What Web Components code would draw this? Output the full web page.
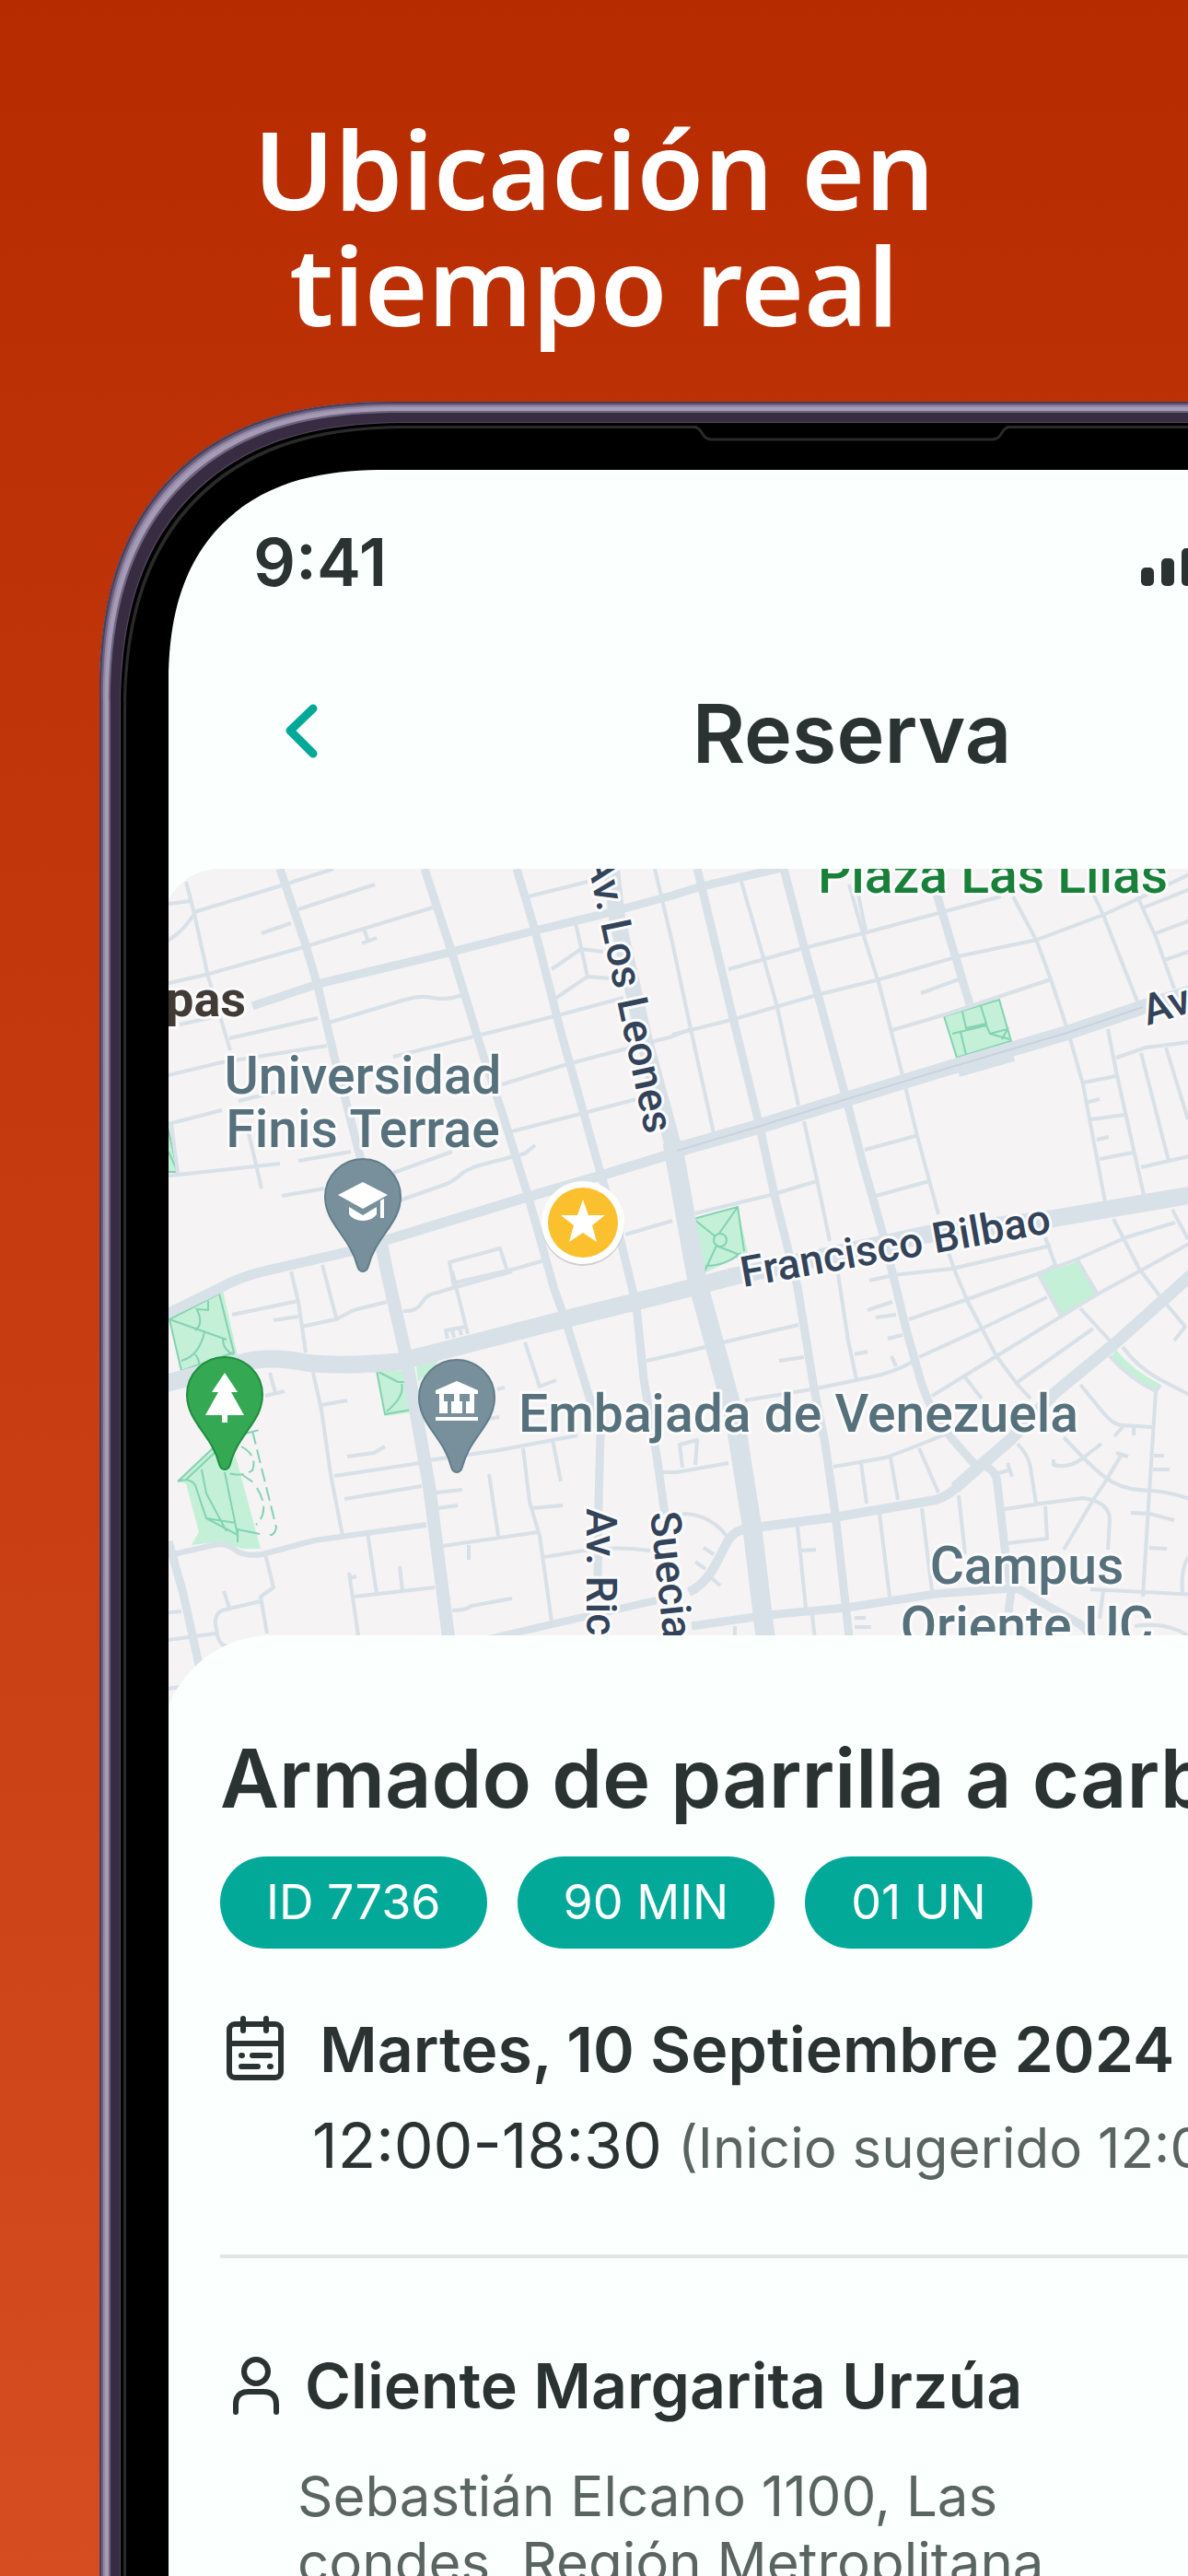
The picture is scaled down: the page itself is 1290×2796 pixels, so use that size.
<!DOCTYPE html>
<html lang="es">
<head>
<meta charset="utf-8">
<meta name="viewport" content="width=device-width, initial-scale=1">
<title>Ubicación en tiempo real</title>
<style>
    body {
        margin: 0;
        font-family: Inter, "Liberation Sans", sans-serif;
        color: #2a3331;
    }
</style>
</head>
<body>
<promo-page>
    <span slot="headline">Ubicación en<br>tiempo real</span>
    <phone-frame>
        <status-bar time="9:41"></status-bar>
        <app-bar>Reserva</app-bar>
        <booking-view>
            <city-map slot="map"></city-map>
            <span slot="title">Armado de parrilla a carbón</span>
            <info-chip slot="chips">ID 7736</info-chip>
            <info-chip slot="chips">90 MIN</info-chip>
            <info-chip slot="chips">01 UN</info-chip>
            <detail-row slot="details" icon="calendar">
                Martes, 10 Septiembre 2024
                <span slot="more"><b>12:00-18:30</b> (Inicio sugerido 12:00)</span>
            </detail-row>
            <detail-row slot="details" icon="person">
                Cliente Margarita Urzúa
                <span slot="more">Sebastián Elcano 1100, Las<br>condes, Región Metroplitana</span>
            </detail-row>
        </booking-view>
    </phone-frame>
</promo-page>

<script>
function makeTemplate(html) {
    const template = document.createElement("template");
    template.innerHTML = html;
    return template;
}

class BaseElement extends HTMLElement {
    constructor() {
        super();
        this.attachShadow({mode: "open"});
        this.shadowRoot.appendChild(this.constructor.template.content.cloneNode(true));
    }
}

class PromoPage extends BaseElement {
    static template = makeTemplate(`
<style>
    :host {
        display: block;
        height: 100vh;
        overflow: hidden;
        background: linear-gradient(#b72b00, #d64d22);
    }

    h1 {
        margin: 0;
        padding: 120px 0 64px;
        font: 600 118px/126px "Noto Sans", "Open Sans", sans-serif;
        text-align: center;
        color: #fff;
    }
</style>
<h1><slot name="headline"></slot></h1>
<slot></slot>
`);
}

class PhoneFrame extends BaseElement {
    static template = makeTemplate(`
<style>
    /* the phone runs off the right edge of the page */
    :host {
        display: block;
        position: relative;
        margin: 0 -452px 0 108px;
        padding: 74px 75px;
        background: #000;
        border-radius: 275px;
        box-shadow:
            inset 0 0 0 2px #4b4059,
            inset 0 0 0 4px #6c607f,
            inset 0 0 0 6px #9488a6,
            inset 0 0 0 10px #a69bb7,
            inset 0 0 0 12px #6f647e,
            inset 0 0 0 22px #372c42,
            inset 0 0 0 23px #54465e,
            inset 0 0 0 26px #000,
            inset 0 0 0 29px #2a2a2a;
    }

    .screen {
        min-height: 3000px;
        overflow: hidden;
        background: #fbfffe;
        border-radius: 200px;
    }

    .speaker {
        position: absolute;
        top: 25px;
        left: 0;
        right: 0;
        margin: 0 auto;
        display: block;
    }

    @supports (corner-shape: superellipse(1.28)) {
        :host {
            border-radius: 322px;
            corner-shape: superellipse(1.28);
        }

        .screen {
            border-radius: 236px;
            corner-shape: superellipse(1.28);
        }
    }
</style>
<svg class="speaker" width="340" height="22" viewBox="0 0 340 22" fill="none" aria-hidden="true">
    <path d="M2 0H338V4H2z" fill="#000"/>
    <path d="M0 3C8 3 6 16 18 16H322C334 16 332 3 340 3" stroke="#2a2a2a" stroke-width="3"/>
</svg>
<div class="screen"><slot></slot></div>
`);
}

class StatusBar extends BaseElement {
    static template = makeTemplate(`
<style>
    :host {
        display: flex;
        justify-content: space-between;
        padding: 60px 95px 0 92px;
        font-size: 72px;
        font-weight: 600;
        line-height: 80px;
    }

    .icons {
        display: flex;
        gap: 24px;
        align-items: center;
    }
</style>
<span class="time"></span>
<div class="icons">
    <svg width="80" height="52" viewBox="0 0 80 52" fill="currentColor" aria-hidden="true">
        <rect x="0" y="32" width="14" height="20" rx="5"/>
        <rect x="22" y="22" width="14" height="30" rx="5"/>
        <rect x="44" y="11" width="14" height="41" rx="5"/>
        <rect x="66" y="0" width="14" height="52" rx="5"/>
    </svg>
    <svg width="85" height="52" viewBox="0 0 85 52" fill="none" stroke="currentColor" stroke-width="9" aria-hidden="true">
        <path d="M5 18Q42 -12 80 18M19 32Q42 12 66 32M34 44Q42 38 51 44"/>
    </svg>
    <svg width="120" height="52" viewBox="0 0 120 52" fill="none" stroke="currentColor" stroke-width="4" aria-hidden="true">
        <rect x="2" y="2" width="104" height="48" rx="14"/>
        <rect x="10" y="10" width="88" height="32" rx="7" fill="currentColor"/>
        <path d="M115 19V33"/>
    </svg>
</div>
`);

    connectedCallback() {
        this.shadowRoot.querySelector(".time").textContent = this.getAttribute("time");
    }
}

class AppBar extends BaseElement {
    static template = makeTemplate(`
<style>
    :host {
        display: grid;
        grid-template-columns: 1fr auto 1fr;
        align-items: center;
        padding: 98px 95px 99px;
    }

    button {
        justify-self: start;
        display: flex;
        padding: 16px 28px;
        border: 0;
        background: none;
        color: #03a998;
    }

    h2 {
        margin: 0;
        font-size: 88px;
        font-weight: 600;
        line-height: 96px;
    }
</style>
<button type="button" aria-label="Volver">
    <svg width="40" height="64" viewBox="0 0 40 64" fill="none" stroke="currentColor" stroke-width="9" stroke-linecap="round" stroke-linejoin="round">
        <path d="M34 5L9 29L34 54"/>
    </svg>
</button>
<h2><slot></slot></h2>
`);
}

class CityMap extends BaseElement {
    static template = makeTemplate(`
<style>
    :host {
        display: block;
        height: 952px;
        overflow: hidden;
        border-radius: 64px 64px 0 0;
        background: #f5f3f4;
    }

    svg {
        display: block;
        width: 100%;
        height: 100%;
    }

    .roads {
        fill: none;
        stroke: #d8e0e8;
        stroke-linejoin: round;
    }

    .park {
        fill: #c3f0d6;
    }

    .trail {
        fill: none;
        stroke: #84d2b3;
        stroke-width: 2;
    }

    text {
        font-family: Roboto, "Liberation Sans", sans-serif;
        font-weight: 500;
        paint-order: stroke;
        stroke: #fbfbfc;
        stroke-width: 6px;
        stroke-linejoin: round;
    }

    .place {
        font-size: 57px;
        fill: #56707c;
        text-anchor: middle;
    }

    .street {
        font-size: 46px;
        fill: #33435a;
    }

    .area {
        font-size: 57px;
        fill: #188038;
        text-anchor: middle;
    }

    .town {
        font-size: 54px;
        font-weight: 700;
        fill: #423a35;
    }
</style>
<svg viewBox="175 943 1500 952" preserveAspectRatio="xMinYMin slice" role="img" aria-label="Mapa">
    <defs>
        <path id="pin" d="M0 82C-3 82 -5 80 -6 76C-14 44 -41 30 -41 1A41 41 0 0 1 41 1C41 30 14 44 6 76C5 80 3 82 0 82Z"/>
    </defs>

    <g class="park">
        <path d="M1025 1103L1085 1085L1098 1130L1039 1148Z"/>
        <path d="M753 1323L801 1310L812 1360L764 1382Z"/>
        <path d="M1130 1383L1171 1369L1191 1405L1153 1427Z"/>
        <path d="M1212 1465Q1228 1486 1259 1502L1253 1510Q1224 1494 1207 1472Z"/>
        <path d="M184 1432L242 1401L258 1472L197 1488Z"/>
        <path d="M409 1488H440L447 1533L418 1537Z"/>
        <path d="M452 1483L477 1477L454 1500Z"/>
        <path d="M213 1547L252 1567L283 1681H263L241 1673L208 1677L216 1663L202 1610L193 1608L231 1572Z"/>
        <path d="M175 1215H182L193 1272H175Z"/>
    </g>
    <g class="trail">
        <path d="M1025 1103L1085 1085L1098 1130L1039 1148ZM1045 1098L1049 1116L1071 1111L1065 1092M1034 1122L1071 1113L1075 1122L1096 1128M1043 1120L1049 1145M1075 1122L1094 1117L1088 1128"/>
        <path d="M753 1323L801 1310L808 1358M753 1323L778 1343L801 1310M764 1382L778 1352L803 1362M766 1374Q788 1374 804 1360"/>
        <circle cx="782" cy="1346" r="7" fill="#c3f0d6"/>
        <path d="M184 1432L238 1404L254 1468L197 1488ZM184 1432L246 1454M213 1420Q222 1436 212 1444M222 1446Q216 1472 197 1477M242 1453Q242 1466 254 1470M212 1470Q218 1478 216 1486M215 1421L226 1422V1412"/>
        <path d="M409 1488L418 1535L447 1530M409 1488L432 1500H440M436 1502Q440 1515 420 1532"/>
        <path d="M193 1608L231 1572M202 1606L236 1574M193 1608Q206 1603 212 1612L224 1648L258 1666L244 1598M219 1595L224 1621L246 1662M224 1648L256 1653M258 1674V1660L282 1665"/>
        <path d="M262 1570Q280 1580 274 1596Q262 1604 244 1598M262 1600L275 1609M274 1553L300 1658Q298 1668 290 1666M279 1615Q294 1640 278 1655M266 1556L282 1552" stroke-dasharray="15 6"/>
        <path d="M182 1223L193 1272H175M183 1250L193 1272"/>
    </g>

    <!-- side streets -->
    <g class="roads" stroke-width="4">
        <path d="M202 957L211 992L226 1060L241 1110L250 1140M175 982L207 978M175 1025C198 1013 205 1000 211 992M211 990L306 961L362 943"/>
        <path d="M324 987L407 960M284 1013L316 1002M175 1069L227 1057L333 1027L470 985M395 1008L400 1022M393 1024L409 1018M195 1112L241 1102"/>
        <path d="M249 1127L345 1105M357 1110L440 1085Q456 1080 470 1083T502 1080M175 1169L241 1153L355 1135M175 1222L241 1205M259 1195L300 1185M427 1147L515 1125L606 1102L677 1083"/>
        <path d="M545 1177L616 1155L681 1138L730 1125L750 1117M556 1228L634 1208L691 1193M186 1220L193 1273M175 1277L304 1263M270 1230L284 1290"/>
        <path d="M324 1260L381 1250M306 1298L352 1290M427 1273L491 1250M434 1303L485 1285Q495 1280 500 1275T520 1265L570 1252L581 1243"/>
        <path d="M574 973L638 957M625 1002L638 1060L663 1062M599 1052L631 1030L655 1033M604 1083L638 1060M711 943L730 1023L750 1117L775 1230M679 1340L730 1325"/>
        <path d="M493 1397L488 1370L543 1355L550 1377M495 1392L560 1377L591 1368M316 1380L324 1413L332 1468M350 1373L365 1430M252 1427L324 1412M297 1433L324 1429M327 1440L365 1432L384 1422L420 1413"/>
        <path d="M438 1423Q452 1424 458 1414T475 1403L495 1397L556 1380M491 1380L508 1448M486 1453L484 1444L506 1440M491 1443L493 1452M499 1442L501 1449"/>
        <path d="M340 1490L349 1530L359 1600L372 1667M349 1525L377 1520M377 1581L406 1577L418 1570M363 1602L456 1588M374 1627L458 1613M466 1585L542 1574L627 1558"/>
        <path d="M474 1620L502 1617M475 1637L497 1634M531 1600L541 1667M481 1678L584 1663M568 1572L575 1630L586 1667L599 1760M577 1637L611 1634M600 1563L609 1608M570 1457L586 1505L604 1498"/>
        <path d="M591 1690L634 1683Q670 1678 706 1683M399 1663L409 1730M384 1733L472 1723M434 1700L437 1727M379 1707L389 1775M379 1713L387 1711M509 1677V1693M491 1748Q505 1748 512 1743L556 1735"/>
        <path d="M288 1687L297 1723L283 1733L290 1773M283 1738L241 1748Q233 1752 234 1762L236 1775Q240 1790 252 1786M243 1727L249 1745M234 1773L175 1781M175 1751L197 1749M175 1834L203 1830"/>
        <path d="M702 1477L766 1462M720 1598H735L791 1588M293 1490L299 1512M288 1515L309 1510M540 1508L548 1506M530 1540L542 1538"/>
        <path d="M803 950L830 1043L844 1093L867 1200M873 1217L887 1280L901 1347M910 1383L921 1455L930 1497M791 1052L869 1030L941 1012L1023 990L1087 973M730 1123L794 1107L887 1080L955 1063L1041 1038L1126 1020L1198 993L1237 975L1300 945"/>
        <path d="M922 960L937 1013L955 1070L980 1167L996 1233L1019 1318M930 962L940 1010M969 1118L1030 1100L1141 1063M1000 1078L1041 1063M939 1248L994 1233M951 1298L1009 1282"/>
        <path d="M1100 973L1126 1022L1141 1063L1159 1117L1176 1177L1201 1310M1187 970L1198 993L1235 1087M1235 973L1255 1017L1275 1073M1242 985L1300 962M1255 1013L1300 996M1264 1042L1300 1030"/>
        <path d="M1203 1117L1212 1163L1242 1297M1212 1148L1244 1137L1300 1130M1239 1143L1269 1260M1266 1137L1290 1215M1176 1175L1212 1168M1185 1215L1221 1210M1194 1258L1230 1251M1239 1267L1300 1253M1178 1197L1194 1193M1191 1237L1204 1234"/>
        <path d="M755 1317L837 1297L887 1282M944 1390L970 1384L1034 1377L1141 1352M987 1432L1051 1410L1126 1383L1169 1367L1223 1343L1276 1327M998 1473L1066 1442L1137 1408M1012 1515L1082 1472L1191 1405L1237 1380L1300 1345M1105 1500L1187 1442"/>
        <path d="M1030 1360L1037 1380L1051 1413L1082 1472L1105 1503L1119 1518M1173 1420L1205 1455M1135 1343L1146 1373L1128 1384L1153 1430M1169 1366L1192 1405M1209 1323L1237 1377L1262 1410L1287 1440L1275 1455M1273 1313L1290 1345M1048 1495L1066 1518"/>
        <path d="M785 1457L867 1438M846 1477L873 1473M730 1471L766 1462M809 1520L887 1507L944 1495Q970 1490 991 1478M928 1470L942 1467M942 1422L969 1413M951 1430L973 1427M964 1453L980 1449M968 1472L973 1483"/>
        <path d="M905 1592L962 1582L994 1570L1026 1557M935 1588L941 1632M967 1582L975 1628M998 1572L1019 1620M955 1643L966 1733M1001 1637L1012 1727M1041 1623L1048 1687M866 1657L875 1745M869 1683L886 1682M882 1753L885 1780M798 1765V1780"/>
        <path d="M741 1643Q770 1643 789 1667M764 1680L775 1687M755 1695L766 1703M773 1713L782 1721M741 1593L738 1568L757 1563L755 1590M928 1756H940M928 1766H946"/>
        <path d="M1105 1567C1117 1580 1119 1590 1120 1600L1125 1632M1091 1638L1130 1632L1176 1626Q1205 1630 1205 1650L1203 1682M1094 1675L1137 1670L1135 1635M1155 1682L1187 1628L1201 1607L1217 1580M1212 1577L1225 1581M1084 1599L1098 1595M1094 1588L1099 1603"/>
        <path d="M1155 1560L1176 1582C1201 1607 1215 1618 1251 1618Q1275 1620 1300 1630M1144 1584V1590Q1160 1594 1174 1584L1196 1567M1173 1503C1194 1527 1205 1547 1219 1547L1251 1549M1219 1549L1210 1559M1231 1549V1558"/>
        <path d="M1255 1510L1248 1620L1241 1733M1253 1580H1264M1252 1595H1270M1248 1680L1267 1681M1228 1642L1248 1643L1275 1650M1184 1725L1300 1731M1198 1727L1194 1757M1219 1462Q1235 1484 1259 1497L1300 1518M1205 1472Q1226 1496 1255 1510L1260 1503M1290 1690Q1282 1705 1284 1728M1232 1765Q1265 1760 1290 1775"/>
    </g>

    <!-- avenues -->
    <g class="roads">
        <path stroke-width="9" d="M304 943L331 1023L345 1070L363 1147L393 1263L413 1350"/>
        <path stroke-width="14" d="M413 1345L420 1380L440 1468L466 1613L488 1785"/>
        <path stroke-width="9" d="M461 943L491 1035L524 1143L545 1207L574 1300L602 1400L613 1430L638 1510L652 1557L650 1630L649 1713"/>
        <path stroke-width="9" d="M561 943L581 1010L609 1120L652 1273L674 1347L691 1417L699 1497L713 1580L722 1643"/>
        <path stroke-width="9" d="M757 943L762 963L794 1097L825 1223L841 1297L866 1397L884 1507L896 1567L907 1643L923 1785"/>
        <path stroke-width="9" d="M851 943L873 1027L891 1090L919 1193L937 1263L959 1340L984 1443L1001 1503Q1012 1535 1034 1562L1059 1590"/>
        <path stroke-width="9" d="M1017 970L1034 1027L1053 1090"/>
        <path stroke-width="9" d="M274 1092L345 1068L491 1033L581 1010L652 993L730 972L762 962L848 942"/>
        <path stroke-width="11" d="M737 1250L649 1277L570 1300L416 1347L381 1358L290 1379Q260 1386 241 1397L175 1429"/>
        <path stroke-width="16" d="M735 1248L823 1223L919 1193L1037 1157L1162 1120L1241 1093L1300 1075M1040 1161L1100 1144"/>
        <path stroke-width="18" d="M663 935L670 997L700 1130L734 1255"/>
        <path stroke-width="21" d="M730 1240L757 1390L798 1540L817 1660L832 1785"/>
        <path stroke-width="19" d="M175 1503L259 1480Q291 1470 338 1480Q380 1483 434 1478L613 1432L730 1403L798 1385L1005 1340L1141 1323L1300 1296"/>
        <path stroke-width="13" d="M1300 1378L1212 1457L1144 1513L1098 1562L1062 1593L1037 1615"/>
        <path stroke-width="10" d="M1042 1611Q1030 1624 1016 1628L905 1647L819 1658Q798 1659 790 1673L776 1700Q765 1720 748 1728"/>
        <path stroke-width="9" d="M1066 1590Q1082 1595 1083 1610L1091 1680L1098 1727L1095 1750"/>
        <path stroke-width="9" d="M751 1765L834 1753L919 1745L1016 1730L1098 1724Q1108 1724 1115 1730L1173 1763L1195 1785"/>
        <path stroke-width="8" d="M527 1780L599 1763L634 1755L713 1737"/>
        <path stroke-width="9" d="M183 1673L199 1730L219 1820"/>
        <path stroke-width="6" d="M188 1687L232 1677Q245 1674 255 1682T285 1687L341 1672L463 1655"/>
    </g>
    <path fill="none" stroke="#cad3dd" stroke-width="2" d="M735 1249L823 1223L919 1193L1037 1157L1162 1120L1241 1093"/>

    <text class="area" x="1078" y="969">Plaza Las Lilas</text>
    <text class="town" x="180" y="1103">pas</text>
    <text class="place" x="394" y="1187">Universidad</text>
    <text class="place" x="394" y="1245">Finis Terrae</text>
    <text class="place" x="867" y="1554">Embajada de Venezuela</text>
    <text class="place" x="1115" y="1719">Campus</text>
    <text class="place" x="1115" y="1784">Oriente UC</text>
    <text class="street" text-anchor="end" transform="translate(701 1232) rotate(78)">Av. Los Leones</text>
    <text class="street" transform="translate(807 1397) rotate(-10)">Francisco Bilbao</text>
    <text class="street" transform="translate(1246 1113) rotate(-17)">Av.</text>
    <text class="street" transform="translate(637 1637) rotate(90)">Av. Ric</text>
    <text class="street" transform="translate(706 1642) rotate(84)">Suecia</text>

    <g transform="translate(394 1298)">
        <use href="#pin" fill="#78909c" stroke="#5f7d8b" stroke-width="2"/>
        <path fill="#fff" d="M-27 -1L0 -15L27 -1L0 14ZM-15 12L0 21L15 12V20Q10 27 0 27T-15 20ZM19 5L23 3V24H19Z"/>
    </g>
    <g transform="translate(244 1513)">
        <use href="#pin" fill="#34a853" stroke="#1e8e3e" stroke-width="2"/>
        <path fill="#fff" d="M0 -23L14 -2H7L21 23H3V31H-3V23H-21L-7 -2H-14Z"/>
    </g>
    <g transform="translate(496 1516)">
        <use href="#pin" fill="#78909c" stroke="#5f7d8b" stroke-width="2"/>
        <path fill="#fff" d="M0 -17L23 -7V-3H19V18H-19V-3H-23V-7ZM-23 22H23V26H-23Z"/>
        <path fill="#78909c" d="M-14 -3H-3V5H-6V18H-10V5H-14ZM3 -3H14V5H10V18H6V5H3Z"/>
    </g>
    <g transform="translate(633 1327)">
        <circle r="45" cy="2" fill="#000" opacity=".15"/>
        <circle r="45" fill="#fff"/>
        <circle r="38" fill="#fbc02d"/>
        <path fill="#fff" d="M0 -25L6 -8H24L10 3L15 21L0 11L-15 21L-10 3L-24 -8H-6Z"/>
    </g>
</svg>
`);
}

class BookingView extends BaseElement {
    static template = makeTemplate(`
<style>
    :host {
        display: block;
        margin: 0 -8px;
    }

    .sheet {
        position: relative;
        margin-top: -120px;
        padding: 105px 64px 0;
        border-radius: 120px 120px 0 0;
        background: #fbfffe;
    }

    h3 {
        margin: 0 0 35px;
        font-size: 88px;
        font-weight: 600;
        line-height: 100px;
        white-space: nowrap;
    }

    .chips {
        display: flex;
        gap: 33px;
        margin-bottom: 69px;
    }
</style>
<slot name="map"></slot>
<section class="sheet">
    <h3><slot name="title"></slot></h3>
    <div class="chips"><slot name="chips"></slot></div>
    <slot name="details"></slot>
</section>
`);
}

class InfoChip extends BaseElement {
    static template = makeTemplate(`
<style>
    :host {
        padding: 0 50px;
        border-radius: 50px;
        background: #03a998;
        color: #fff;
        font-size: 52px;
        line-height: 100px;
    }
</style>
<slot></slot>
`);
}

class DetailRow extends BaseElement {
    static icons = {
        calendar: `
            <rect x="10" y="13" width="56" height="58" rx="6"/>
            <path d="M10 34H66M25 7V20M50 7V20M23 47H24M35 47H54M23 59H41M54 59H55"/>`,
        person: `
            <circle cx="39" cy="25" r="13"/>
            <path d="M17 69V61Q17 47 31 47H47Q61 47 61 61V69"/>`
    };

    static template = makeTemplate(`
<style>
    :host {
        display: block;
    }

    :host([icon="calendar"]) {
        padding-bottom: 76px;
        margin-bottom: 98px;
        border-bottom: 4px solid #e1e6e5;
    }

    .head {
        display: flex;
        align-items: center;
        gap: 32px;
        font-size: 68px;
        font-weight: 600;
        line-height: 80px;
        white-space: nowrap;
    }

    .more {
        margin-top: 24px;
        padding-left: 100px;
        font-size: 60px;
        line-height: 80px;
        color: #5a6562;
        white-space: nowrap;
    }

    :host([icon="person"]) .head {
        gap: 16px;
    }

    :host([icon="person"]) .more {
        margin-top: 44px;
        padding-left: 84px;
        line-height: 72px;
    }

    ::slotted(span) {
        display: block;
    }

    svg {
        flex: none;
    }
</style>
<div class="head">
    <svg width="76" height="80" viewBox="0 0 76 80" fill="none" stroke="currentColor" stroke-width="6" stroke-linecap="round" aria-hidden="true"></svg>
    <div><slot></slot></div>
</div>
<div class="more"><slot name="more"></slot></div>
`);

    connectedCallback() {
        this.shadowRoot.querySelector("svg").innerHTML = DetailRow.icons[this.getAttribute("icon")];

        //the hours stand out from the hint that follows them
        const hours = this.querySelector("b");
        if (hours) hours.style = "font-weight: 400; font-size: 68px; color: #2a3331";
    }
}

customElements.define("promo-page", PromoPage);
customElements.define("phone-frame", PhoneFrame);
customElements.define("status-bar", StatusBar);
customElements.define("app-bar", AppBar);
customElements.define("city-map", CityMap);
customElements.define("booking-view", BookingView);
customElements.define("info-chip", InfoChip);
customElements.define("detail-row", DetailRow);
</script>
</body>
</html>
